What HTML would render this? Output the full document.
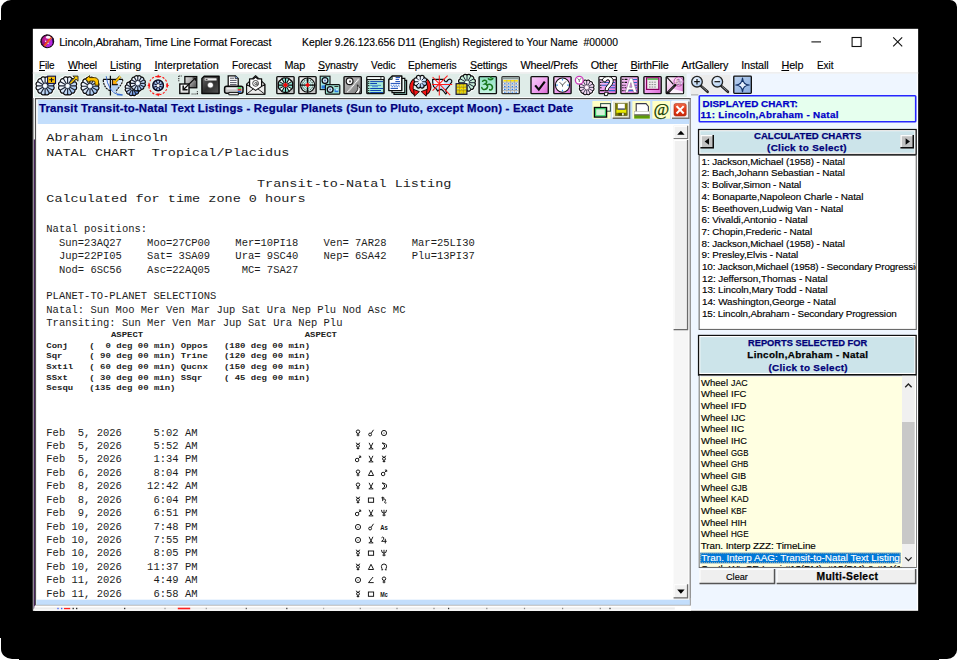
<!DOCTYPE html>
<html><head><meta charset="utf-8"><title>Kepler</title>
<style>
html,body{margin:0;padding:0;}
body{width:957px;height:660px;overflow:hidden;background:#fff;position:relative;font-family:"Liberation Sans",sans-serif;}
body div,body span.t,body svg.i{position:absolute;}
span.t{white-space:pre;line-height:1;}
u{text-decoration:underline;text-decoration-thickness:1px;text-underline-offset:1px;}
</style></head>
<body>
<svg class="i" style="left:0;top:0" width="957" height="660" viewBox="0 0 957 660"><path d="M11 0H950A7 7 0 0 1 957 7V650A10 9 0 0 1 947 659H939V660H19V659H12A11 10 0 0 1 1 649V638H0V20H1V9A10 9 0 0 1 11 0Z" fill="#000" /><rect x="32.85" y="28.8" width="885.3" height="582" fill="#fff" /><g stroke="#111" stroke-width="1.1" fill="none"><path d="M811.4 41.9H821"/><rect x="852.1" y="37.5" width="9" height="9"/><path d="M893.2 37.3L902.2 46.3M902.2 37.3L893.2 46.3"/></g><rect x="32.85" y="72.2" width="885.3" height="1.5" fill="#ececec" /><rect x="34.4" y="73.7" width="652.4" height="23.4" fill="#dfece8" /><rect x="686.8" y="73.7" width="230" height="535.8" fill="#eff6ff" /><rect x="690.6" y="74.6" width="40" height="19.6" fill="#ececec" /><rect x="691" y="94.2" width="7.4" height="1.3" fill="#b4b4b4" /><rect x="34.4" y="97.1" width="656.6" height="512.4" fill="#fbfbfb" /><rect x="36" y="99.1" width="653.9" height="505.6" fill="#fff" /><rect x="32.85" y="98" width="0.9" height="511.5" fill="#8a8a8a" /><rect x="33.8" y="139.5" width="1.2" height="469" fill="#3a0850" /><rect x="34.85" y="139.5" width="1.2" height="466" fill="#8c988c" /><path d="M35.5 605.2V98.6H690.8" fill="none" stroke="#505050" stroke-width="1.15" /><path d="M690.2 98.2L690.2 605.6" stroke="#7c7c7c" stroke-width="1.2" fill="none" /><rect x="37.7" y="99.8" width="651.6" height="24.2" fill="#c3defc" /><rect x="673.6" y="125.4" width="14.8" height="474.2" fill="#f6f6f6" /><rect x="673.6" y="125.8" width="14.600000000000023" height="13.200000000000003" fill="#f0f0f0" /><path d="M674.1 139V126.3H688.2" fill="none" stroke="#fff" stroke-width="1" /><path d="M673.6 138.45H687.6500000000001V125.8" fill="none" stroke="#7a7a7a" stroke-width="1.1" /><path d="M677.2 134.7L680.9 130.7L684.6 134.7Z" fill="#000" /><rect x="673.6" y="140" width="14.600000000000023" height="190.2" fill="#f0f0f0" /><path d="M674.1 330.2V140.5H688.2" fill="none" stroke="#fff" stroke-width="1" /><path d="M673.6 329.55H687.5500000000001V140" fill="none" stroke="#6a6a6a" stroke-width="1.3" /><rect x="673.6" y="584.2" width="14.600000000000023" height="14.299999999999955" fill="#f0f0f0" /><path d="M674.1 598.5V584.7H688.2" fill="none" stroke="#fff" stroke-width="1" /><path d="M673.6 597.85H687.5500000000001V584.2" fill="none" stroke="#6a6a6a" stroke-width="1.3" /><path d="M677.2 589.6L680.9 593.7L684.6 589.6Z" fill="#000" /><rect x="36.5" y="599.7" width="653.4" height="5.3" fill="#c3defc" /><path d="M35.8 605.3H690.4V598" fill="none" stroke="#a8a8a8" stroke-width="0.9" /><rect x="34.4" y="605.8" width="656.6" height="5" fill="#fff" /><rect x="34.4" y="607.4" width="640.4" height="2.1" fill="#ededed" /><rect x="57.4" y="607.8" width="1.2" height="1.4" fill="#3050ff" /><rect x="61.1" y="607.8" width="1.2" height="1.4" fill="#3050ff" /><rect x="72.60000000000001" y="607.8" width="1.2" height="1.4" fill="#111" /><rect x="76.10000000000001" y="607.8" width="1.2" height="1.4" fill="#111" /><rect x="124.10000000000001" y="607.8" width="1.2" height="1.4" fill="#222" /><rect x="164.4" y="607.8" width="1.2" height="1.4" fill="#999" /><rect x="205.70000000000002" y="607.8" width="1.2" height="1.4" fill="#999" /><rect x="245.70000000000002" y="607.8" width="1.2" height="1.4" fill="#555" /><rect x="286.2" y="607.8" width="1.2" height="1.4" fill="#333" /><rect x="323.0" y="607.8" width="1.2" height="1.4" fill="#aaa" /><rect x="359.7" y="607.8" width="1.2" height="1.4" fill="#888" /><rect x="396.4" y="607.8" width="1.2" height="1.4" fill="#888" /><rect x="433.4" y="607.8" width="1.2" height="1.4" fill="#888" /><rect x="448.0" y="607.8" width="1.2" height="1.4" fill="#333" /><rect x="486.2" y="607.8" width="1.2" height="1.4" fill="#888" /><rect x="523.9" y="607.8" width="1.2" height="1.4" fill="#888" /><rect x="562.0" y="607.8" width="1.2" height="1.4" fill="#888" /><rect x="599.6999999999999" y="607.8" width="1.2" height="1.4" fill="#888" /><rect x="609.4" y="607.8" width="1.2" height="1.4" fill="#333" /><rect x="64" y="607.9" width="6.2" height="1.3" fill="#ff2020" /><rect x="177.8" y="607.7" width="12.4" height="1.6" fill="#ff2020" /><rect x="699.3" y="95.8" width="216.4" height="25.999999999999993" fill="#e6ffee" stroke="#2626ff" stroke-width="1.6" rx="0.8" /><rect x="697.9" y="128.9" width="218.89999999999998" height="26.0" fill="#101010" /><rect x="699.1999999999999" y="130.1" width="216.29999999999998" height="23.8" fill="#fff" /><rect x="700.3" y="131.20000000000002" width="214.09999999999997" height="21.6" fill="#cce4ea" /><rect x="700.4" y="134.9" width="13.600000000000023" height="13.699999999999989" fill="#c2c2c2" /><path d="M701.1 148.6V135.6H714" fill="none" stroke="#fcfcfc" stroke-width="1.4" /><path d="M700.4 147.85H713.25V134.9" fill="none" stroke="#0c0c0c" stroke-width="1.5" /><path d="M709.0 138.25L704.6 141.55L709.0 144.85000000000002Z" fill="#0a0a0a" /><rect x="900.4" y="134.9" width="13.600000000000023" height="13.699999999999989" fill="#c2c2c2" /><path d="M901.1 148.6V135.6H914" fill="none" stroke="#fcfcfc" stroke-width="1.4" /><path d="M900.4 147.85H913.25V134.9" fill="none" stroke="#0c0c0c" stroke-width="1.5" /><path d="M905.6 138.25L910.0 141.55L905.6 144.85000000000002Z" fill="#0a0a0a" /><rect x="699.15" y="155.45000000000002" width="217.09999999999994" height="174.0" fill="#fff" stroke="#6a6a6a" stroke-width="1.1" /><rect x="697.9" y="334.8" width="218.89999999999998" height="41.0" fill="#101010" /><rect x="699.1999999999999" y="336.0" width="216.29999999999998" height="38.0" fill="#fff" /><rect x="700.3" y="337.1" width="214.09999999999997" height="35.800000000000004" fill="#cce4ea" /><rect x="699.25" y="376.35" width="216.99999999999991" height="191.1" fill="#ffffe1" stroke="#6a6a6a" stroke-width="1.1" /><rect x="699.8" y="375.8" width="215" height="1.1" fill="#fff" /><rect x="699.8" y="375.8" width="1" height="191" fill="#fff" /><rect x="700.2" y="552.7" width="200.4" height="10.6" fill="#0078d7" /><rect x="700.7" y="553.2" width="199.4" height="9.6" fill="none" stroke="#f0c890" stroke-width="0.9" stroke-dasharray="1 1"/><rect x="902" y="375.8" width="12.8" height="191.3" fill="#f0f0f0" /><rect x="902" y="422" width="12.8" height="122" fill="#c8c8c8" /><rect x="914.8" y="375.8" width="1.2" height="191.3" fill="#fff" /><path d="M905.2 387.2L908.4 384L911.6 387.2M905.2 557.4L908.4 560.6L911.6 557.4" fill="none" stroke="#222" stroke-width="1.3" /><rect x="699.5" y="568.9" width="75.79999999999995" height="15.300000000000068" fill="#efefef" /><path d="M700.0 584.2V569.4H775.3" fill="none" stroke="#fff" stroke-width="1" /><path d="M699.5 583.45H774.55V568.9" fill="none" stroke="#555" stroke-width="1.5" /><rect x="776.6" y="568.9" width="139.79999999999995" height="15.300000000000068" fill="#efefef" /><path d="M777.1 584.2V569.4H916.4" fill="none" stroke="#fff" stroke-width="1" /><path d="M776.6 583.45H915.65V568.9" fill="none" stroke="#555" stroke-width="1.5" /></svg>
<span class="t" style="left:59.2px;top:37px;font-size:10.8px;color:#000;-webkit-text-stroke:.15px;letter-spacing:-0.093px;">Lincoln,Abraham, Time Line Format Forecast</span>
<span class="t" style="left:301.5px;top:37px;font-size:10.8px;color:#000;-webkit-text-stroke:.15px;transform:scale(0.956,1);transform-origin:0 84.65%;">Kepler 9.26.123.656 D11 (English) Registered to Your Name  #00000</span>
<span class="t" style="left:39.4px;top:60px;font-size:10.8px;color:#000;-webkit-text-stroke:.15px;letter-spacing:-0.15px;transform:scale(0.92,1);transform-origin:0 84.65%;"><u>F</u>ile</span>
<span class="t" style="left:68.2px;top:60px;font-size:10.8px;color:#000;-webkit-text-stroke:.15px;letter-spacing:-0.15px;transform:scale(0.973,1);transform-origin:0 84.65%;"><u>W</u>heel</span>
<span class="t" style="left:110px;top:60px;font-size:10.8px;color:#000;-webkit-text-stroke:.15px;letter-spacing:0.014px;"><u>L</u>isting</span>
<span class="t" style="left:154.5px;top:60px;font-size:10.8px;color:#000;-webkit-text-stroke:.15px;letter-spacing:0.044px;"><u>I</u>nterpretation</span>
<span class="t" style="left:232.2px;top:60px;font-size:10.8px;color:#000;-webkit-text-stroke:.15px;transform:scale(0.933,1);transform-origin:0 84.65%;">Forecast</span>
<span class="t" style="left:284.5px;top:60px;font-size:10.8px;color:#000;-webkit-text-stroke:.15px;letter-spacing:-0.158px;">Map</span>
<span class="t" style="left:317.9px;top:60px;font-size:10.8px;color:#000;-webkit-text-stroke:.15px;letter-spacing:-0.15px;transform:scale(0.9789,1);transform-origin:0 84.65%;"><u>S</u>ynastry</span>
<span class="t" style="left:370.5px;top:60px;font-size:10.8px;color:#000;-webkit-text-stroke:.15px;transform:scale(0.9273,1);transform-origin:0 84.65%;">Vedic</span>
<span class="t" style="left:408px;top:60px;font-size:10.8px;color:#000;-webkit-text-stroke:.15px;transform:scale(0.9436,1);transform-origin:0 84.65%;">Ephemeris</span>
<span class="t" style="left:470.2px;top:60px;font-size:10.8px;color:#000;-webkit-text-stroke:.15px;letter-spacing:-0.15px;transform:scale(0.9825,1);transform-origin:0 84.65%;"><u>S</u>ettings</span>
<span class="t" style="left:520.4px;top:60px;font-size:10.8px;color:#000;-webkit-text-stroke:.15px;letter-spacing:-0.121px;">Wheel/Prefs</span>
<span class="t" style="left:590.8px;top:60px;font-size:10.8px;color:#000;-webkit-text-stroke:.15px;letter-spacing:-0.079px;">Othe<u>r</u></span>
<span class="t" style="left:630.4px;top:60px;font-size:10.8px;color:#000;-webkit-text-stroke:.15px;letter-spacing:-0.151px;"><u>B</u>irthFile</span>
<span class="t" style="left:681.6px;top:60px;font-size:10.8px;color:#000;-webkit-text-stroke:.15px;letter-spacing:-0.133px;">ArtGallery</span>
<span class="t" style="left:741.2px;top:60px;font-size:10.8px;color:#000;-webkit-text-stroke:.15px;letter-spacing:-0.136px;">Install</span>
<span class="t" style="left:781.4px;top:60px;font-size:10.8px;color:#000;-webkit-text-stroke:.15px;letter-spacing:-0.073px;"><u>H</u>elp</span>
<span class="t" style="left:816.9px;top:60px;font-size:10.8px;color:#000;-webkit-text-stroke:.15px;transform:scale(0.9167,1);transform-origin:0 84.65%;">Exit</span>
<span class="t" style="left:38.9px;top:103px;font-size:11.4px;color:#00007c;font-weight:700;-webkit-text-stroke:.25px;letter-spacing:0.199px;">Transit Transit-to-Natal Text Listings - Regular Planets (Sun to Pluto, except Moon) - Exact Date</span>
<span class="t" style="left:46.3px;top:131px;font-size:13.5px;color:#1c1c1c;font-family:'Liberation Mono',monospace;transform:scale(1,0.8);transform-origin:0 76.65%;">Abraham Lincoln</span>
<span class="t" style="left:46.3px;top:146px;font-size:13.5px;color:#1c1c1c;font-family:'Liberation Mono',monospace;transform:scale(1,0.8);transform-origin:0 76.65%;">NATAL CHART  Tropical/Placidus</span>
<span class="t" style="left:46.3px;top:177px;font-size:13.5px;color:#1c1c1c;font-family:'Liberation Mono',monospace;transform:scale(1,0.8);transform-origin:0 76.65%;">                          Transit-to-Natal Listing</span>
<span class="t" style="left:46.3px;top:192px;font-size:13.5px;color:#1c1c1c;font-family:'Liberation Mono',monospace;transform:scale(1,0.8);transform-origin:0 76.65%;">Calculated for time zone 0 hours</span>
<span class="t" style="left:46.3px;top:224px;font-size:10.5px;color:#1c1c1c;font-family:'Liberation Mono',monospace;transform:scale(1,0.98);transform-origin:0 76.65%;">Natal positions:</span>
<span class="t" style="left:46.3px;top:238px;font-size:10.5px;color:#1c1c1c;font-family:'Liberation Mono',monospace;transform:scale(1,0.98);transform-origin:0 76.65%;">  Sun=23AQ27    Moo=27CP00    Mer=10PI18    Ven= 7AR28    Mar=25LI30</span>
<span class="t" style="left:46.3px;top:251px;font-size:10.5px;color:#1c1c1c;font-family:'Liberation Mono',monospace;transform:scale(1,0.98);transform-origin:0 76.65%;">  Jup=22PI05    Sat= 3SA09    Ura= 9SC40    Nep= 6SA42    Plu=13PI37</span>
<span class="t" style="left:46.3px;top:265px;font-size:10.5px;color:#1c1c1c;font-family:'Liberation Mono',monospace;transform:scale(1,0.98);transform-origin:0 76.65%;">  Nod= 6SC56    Asc=22AQ05     MC= 7SA27</span>
<span class="t" style="left:46.3px;top:291px;font-size:10.5px;color:#1c1c1c;font-family:'Liberation Mono',monospace;transform:scale(1,0.98);transform-origin:0 76.65%;">PLANET-TO-PLANET SELECTIONS</span>
<span class="t" style="left:46.3px;top:305px;font-size:10.5px;color:#1c1c1c;font-family:'Liberation Mono',monospace;transform:scale(1,0.98);transform-origin:0 76.65%;">Natal: Sun Moo Mer Ven Mar Jup Sat Ura Nep Plu Nod Asc MC</span>
<span class="t" style="left:46.3px;top:318px;font-size:10.5px;color:#1c1c1c;font-family:'Liberation Mono',monospace;transform:scale(1,0.98);transform-origin:0 76.65%;">Transiting: Sun Mer Ven Mar Jup Sat Ura Nep Plu</span>
<span class="t" style="left:46.3px;top:331px;font-size:8.97px;color:#222;font-weight:700;font-family:'Liberation Mono',monospace;transform:scale(1,0.82);transform-origin:0 76.65%;">            ASPECT                              ASPECT</span>
<span class="t" style="left:46.3px;top:342px;font-size:8.97px;color:#222;font-weight:700;font-family:'Liberation Mono',monospace;transform:scale(1,0.82);transform-origin:0 76.65%;">Conj    (  0 deg 00 min) Oppos   (180 deg 00 min)</span>
<span class="t" style="left:46.3px;top:352px;font-size:8.97px;color:#222;font-weight:700;font-family:'Liberation Mono',monospace;transform:scale(1,0.82);transform-origin:0 76.65%;">Sqr     ( 90 deg 00 min) Trine   (120 deg 00 min)</span>
<span class="t" style="left:46.3px;top:363px;font-size:8.97px;color:#222;font-weight:700;font-family:'Liberation Mono',monospace;transform:scale(1,0.82);transform-origin:0 76.65%;">Sxtil   ( 60 deg 00 min) Qucnx   (150 deg 00 min)</span>
<span class="t" style="left:46.3px;top:374px;font-size:8.97px;color:#222;font-weight:700;font-family:'Liberation Mono',monospace;transform:scale(1,0.82);transform-origin:0 76.65%;">SSxt    ( 30 deg 00 min) SSqr    ( 45 deg 00 min)</span>
<span class="t" style="left:46.3px;top:384px;font-size:8.97px;color:#222;font-weight:700;font-family:'Liberation Mono',monospace;transform:scale(1,0.82);transform-origin:0 76.65%;">Sesqu   (135 deg 00 min)</span>
<span class="t" style="left:46.3px;top:428px;font-size:10.5px;color:#1c1c1c;font-family:'Liberation Mono',monospace;transform:scale(1,0.98);transform-origin:0 76.65%;">Feb  5, 2026     5:02 AM</span>
<svg class="i" style="left:354.20px;top:428.50px" width="8" height="8" viewBox="-4 -4 8 8"><g fill="none" stroke="#111" stroke-width=".95"><circle cx="0" cy="-1.3" r="1.75"/><path d="M0 .5V3.3M-1.4 2H1.4"/></g></svg>
<svg class="i" style="left:367.10px;top:428.50px" width="8" height="8" viewBox="-4 -4 8 8"><g fill="none" stroke="#111" stroke-width=".95"><circle cx="-.9" cy="1.5" r="1.45"/><path d="M.1 .4L2.5 -3.2"/></g></svg>
<svg class="i" style="left:380.00px;top:428.50px" width="8" height="8" viewBox="-4 -4 8 8"><g fill="none" stroke="#111" stroke-width=".95"><circle cx="0" cy="0" r="2.6"/><circle cx="0" cy="0" r=".55" fill="#111" stroke="none"/></g></svg>
<span class="t" style="left:46.3px;top:441px;font-size:10.5px;color:#1c1c1c;font-family:'Liberation Mono',monospace;transform:scale(1,0.98);transform-origin:0 76.65%;">Feb  5, 2026     5:52 AM</span>
<svg class="i" style="left:354.20px;top:441.93px" width="8" height="8" viewBox="-4 -4 8 8"><g fill="none" stroke="#111" stroke-width=".95"><circle cx="0" cy="-.2" r="1.45"/><path d="M-1.7 -3.3Q-1.5 -1.7 0 -1.7Q1.5 -1.7 1.7 -3.3M0 1.3V3.4M-1.3 2.4H1.3"/></g></svg>
<svg class="i" style="left:367.10px;top:441.93px" width="8" height="8" viewBox="-4 -4 8 8"><g fill="none" stroke="#111" stroke-width=".95"><path d="M-1.9 -3.2L0 .9L1.9 -3.2M0 .9L-1.7 2.7M0 .9L1.7 2.7M-2.3 2.9H2.3"/></g></svg>
<svg class="i" style="left:380.00px;top:441.93px" width="8" height="8" viewBox="-4 -4 8 8"><g fill="none" stroke="#111" stroke-width=".95"><path d="M-1.9 -3Q2.6 -2.6 2.6 0Q2.6 2.6 -1.9 3Q.7 1.8 .7 0Q.7 -1.8 -1.9 -3Z"/></g></svg>
<span class="t" style="left:46.3px;top:454px;font-size:10.5px;color:#1c1c1c;font-family:'Liberation Mono',monospace;transform:scale(1,0.98);transform-origin:0 76.65%;">Feb  5, 2026     1:34 PM</span>
<svg class="i" style="left:354.20px;top:455.36px" width="8" height="8" viewBox="-4 -4 8 8"><g fill="none" stroke="#111" stroke-width=".95"><circle cx="-.9" cy="1" r="1.75"/><path d="M.4 -.3L2.5 -2.6M.9 -2.9H2.7V-1.1"/></g></svg>
<svg class="i" style="left:367.10px;top:455.36px" width="8" height="8" viewBox="-4 -4 8 8"><g fill="none" stroke="#111" stroke-width=".95"><path d="M-1.9 -3.2L0 .9L1.9 -3.2M0 .9L-1.7 2.7M0 .9L1.7 2.7M-2.3 2.9H2.3"/></g></svg>
<svg class="i" style="left:380.00px;top:455.36px" width="8" height="8" viewBox="-4 -4 8 8"><g fill="none" stroke="#111" stroke-width=".95"><circle cx="0" cy="-.2" r="1.45"/><path d="M-1.7 -3.3Q-1.5 -1.7 0 -1.7Q1.5 -1.7 1.7 -3.3M0 1.3V3.4M-1.3 2.4H1.3"/></g></svg>
<span class="t" style="left:46.3px;top:468px;font-size:10.5px;color:#1c1c1c;font-family:'Liberation Mono',monospace;transform:scale(1,0.98);transform-origin:0 76.65%;">Feb  6, 2026     8:04 PM</span>
<svg class="i" style="left:354.20px;top:468.79px" width="8" height="8" viewBox="-4 -4 8 8"><g fill="none" stroke="#111" stroke-width=".95"><circle cx="0" cy="-1.3" r="1.75"/><path d="M0 .5V3.3M-1.4 2H1.4"/></g></svg>
<svg class="i" style="left:367.10px;top:468.79px" width="8" height="8" viewBox="-4 -4 8 8"><g fill="none" stroke="#111" stroke-width=".95"><path d="M0 -2.7L2.6 2.5H-2.6Z"/></g></svg>
<svg class="i" style="left:380.00px;top:468.79px" width="8" height="8" viewBox="-4 -4 8 8"><g fill="none" stroke="#111" stroke-width=".95"><circle cx="-.9" cy="1" r="1.75"/><path d="M.4 -.3L2.5 -2.6M.9 -2.9H2.7V-1.1"/></g></svg>
<span class="t" style="left:46.3px;top:481px;font-size:10.5px;color:#1c1c1c;font-family:'Liberation Mono',monospace;transform:scale(1,0.98);transform-origin:0 76.65%;">Feb  8, 2026    12:42 AM</span>
<svg class="i" style="left:354.20px;top:482.22px" width="8" height="8" viewBox="-4 -4 8 8"><g fill="none" stroke="#111" stroke-width=".95"><circle cx="0" cy="-1.3" r="1.75"/><path d="M0 .5V3.3M-1.4 2H1.4"/></g></svg>
<svg class="i" style="left:367.10px;top:482.22px" width="8" height="8" viewBox="-4 -4 8 8"><g fill="none" stroke="#111" stroke-width=".95"><path d="M-1.9 -3.2L0 .9L1.9 -3.2M0 .9L-1.7 2.7M0 .9L1.7 2.7M-2.3 2.9H2.3"/></g></svg>
<svg class="i" style="left:380.00px;top:482.22px" width="8" height="8" viewBox="-4 -4 8 8"><g fill="none" stroke="#111" stroke-width=".95"><path d="M-1.9 -3Q2.6 -2.6 2.6 0Q2.6 2.6 -1.9 3Q.7 1.8 .7 0Q.7 -1.8 -1.9 -3Z"/></g></svg>
<span class="t" style="left:46.3px;top:495px;font-size:10.5px;color:#1c1c1c;font-family:'Liberation Mono',monospace;transform:scale(1,0.98);transform-origin:0 76.65%;">Feb  8, 2026     6:04 PM</span>
<svg class="i" style="left:354.20px;top:495.65px" width="8" height="8" viewBox="-4 -4 8 8"><g fill="none" stroke="#111" stroke-width=".95"><circle cx="0" cy="-.2" r="1.45"/><path d="M-1.7 -3.3Q-1.5 -1.7 0 -1.7Q1.5 -1.7 1.7 -3.3M0 1.3V3.4M-1.3 2.4H1.3"/></g></svg>
<svg class="i" style="left:367.10px;top:495.65px" width="8" height="8" viewBox="-4 -4 8 8"><g fill="none" stroke="#111" stroke-width=".95"><rect x="-2.6" y="-2" width="5.2" height="4.3"/></g></svg>
<svg class="i" style="left:380.00px;top:495.65px" width="8" height="8" viewBox="-4 -4 8 8"><g fill="none" stroke="#111" stroke-width=".95"><path d="M-1.3 -3.3V1.1M-2.6 -2.2H.2M-1.3 -.3Q-.3 -1.5 .9 -.9Q2.2 0 1 1.5Q.4 2.4 1 3Q1.6 3.4 2.4 2.8"/></g></svg>
<span class="t" style="left:46.3px;top:508px;font-size:10.5px;color:#1c1c1c;font-family:'Liberation Mono',monospace;transform:scale(1,0.98);transform-origin:0 76.65%;">Feb  9, 2026     6:51 PM</span>
<svg class="i" style="left:354.20px;top:509.08px" width="8" height="8" viewBox="-4 -4 8 8"><g fill="none" stroke="#111" stroke-width=".95"><circle cx="-.9" cy="1" r="1.75"/><path d="M.4 -.3L2.5 -2.6M.9 -2.9H2.7V-1.1"/></g></svg>
<svg class="i" style="left:367.10px;top:509.08px" width="8" height="8" viewBox="-4 -4 8 8"><g fill="none" stroke="#111" stroke-width=".95"><path d="M-1.9 -3.2L0 .9L1.9 -3.2M0 .9L-1.7 2.7M0 .9L1.7 2.7M-2.3 2.9H2.3"/></g></svg>
<svg class="i" style="left:380.00px;top:509.08px" width="8" height="8" viewBox="-4 -4 8 8"><g fill="none" stroke="#111" stroke-width=".95"><path d="M-2.5 -3.1Q-2.5 .2 0 .2Q2.5 .2 2.5 -3.1M0 -3.2V3.3M-1.6 2.1H1.6"/></g></svg>
<span class="t" style="left:46.3px;top:522px;font-size:10.5px;color:#1c1c1c;font-family:'Liberation Mono',monospace;transform:scale(1,0.98);transform-origin:0 76.65%;">Feb 10, 2026     7:48 PM</span>
<svg class="i" style="left:354.20px;top:522.51px" width="8" height="8" viewBox="-4 -4 8 8"><g fill="none" stroke="#111" stroke-width=".95"><circle cx="0" cy="0" r="2.6"/><circle cx="0" cy="0" r=".55" fill="#111" stroke="none"/></g></svg>
<svg class="i" style="left:367.10px;top:522.51px" width="8" height="8" viewBox="-4 -4 8 8"><g fill="none" stroke="#111" stroke-width=".95"><circle cx="-.9" cy="1.5" r="1.45"/><path d="M.1 .4L2.5 -3.2"/></g></svg>
<svg class="i" style="left:379.00px;top:522.51px" width="10" height="8" viewBox="-5 -4 10 8"><text x="0" y="3" text-anchor="middle" font-family="Liberation Sans" font-size="7.2" font-weight="700" fill="#111" textLength="7.5" lengthAdjust="spacingAndGlyphs">As</text></svg>
<span class="t" style="left:46.3px;top:535px;font-size:10.5px;color:#1c1c1c;font-family:'Liberation Mono',monospace;transform:scale(1,0.98);transform-origin:0 76.65%;">Feb 10, 2026     7:55 PM</span>
<svg class="i" style="left:354.20px;top:535.94px" width="8" height="8" viewBox="-4 -4 8 8"><g fill="none" stroke="#111" stroke-width=".95"><circle cx="0" cy="0" r="2.6"/><circle cx="0" cy="0" r=".55" fill="#111" stroke="none"/></g></svg>
<svg class="i" style="left:367.10px;top:535.94px" width="8" height="8" viewBox="-4 -4 8 8"><g fill="none" stroke="#111" stroke-width=".95"><path d="M-1.9 -3.2L0 .9L1.9 -3.2M0 .9L-1.7 2.7M0 .9L1.7 2.7M-2.3 2.9H2.3"/></g></svg>
<svg class="i" style="left:380.00px;top:535.94px" width="8" height="8" viewBox="-4 -4 8 8"><g fill="none" stroke="#111" stroke-width=".95"><path d="M-2.5 -2.2Q-1.2 -3.6 -.3 -2.4Q.6 -.8 -2.4 1.3H2.7M1.3 -1.2V3.4"/></g></svg>
<span class="t" style="left:46.3px;top:548px;font-size:10.5px;color:#1c1c1c;font-family:'Liberation Mono',monospace;transform:scale(1,0.98);transform-origin:0 76.65%;">Feb 10, 2026     8:05 PM</span>
<svg class="i" style="left:354.20px;top:549.37px" width="8" height="8" viewBox="-4 -4 8 8"><g fill="none" stroke="#111" stroke-width=".95"><circle cx="0" cy="-.2" r="1.45"/><path d="M-1.7 -3.3Q-1.5 -1.7 0 -1.7Q1.5 -1.7 1.7 -3.3M0 1.3V3.4M-1.3 2.4H1.3"/></g></svg>
<svg class="i" style="left:367.10px;top:549.37px" width="8" height="8" viewBox="-4 -4 8 8"><g fill="none" stroke="#111" stroke-width=".95"><rect x="-2.6" y="-2" width="5.2" height="4.3"/></g></svg>
<svg class="i" style="left:380.00px;top:549.37px" width="8" height="8" viewBox="-4 -4 8 8"><g fill="none" stroke="#111" stroke-width=".95"><path d="M-2.5 -3.1Q-2.5 .2 0 .2Q2.5 .2 2.5 -3.1M0 -3.2V3.3M-1.6 2.1H1.6"/></g></svg>
<span class="t" style="left:46.3px;top:562px;font-size:10.5px;color:#1c1c1c;font-family:'Liberation Mono',monospace;transform:scale(1,0.98);transform-origin:0 76.65%;">Feb 10, 2026    11:37 PM</span>
<svg class="i" style="left:354.20px;top:562.80px" width="8" height="8" viewBox="-4 -4 8 8"><g fill="none" stroke="#111" stroke-width=".95"><circle cx="0" cy="-.2" r="1.45"/><path d="M-1.7 -3.3Q-1.5 -1.7 0 -1.7Q1.5 -1.7 1.7 -3.3M0 1.3V3.4M-1.3 2.4H1.3"/></g></svg>
<svg class="i" style="left:367.10px;top:562.80px" width="8" height="8" viewBox="-4 -4 8 8"><g fill="none" stroke="#111" stroke-width=".95"><path d="M0 -2.7L2.6 2.5H-2.6Z"/></g></svg>
<svg class="i" style="left:380.00px;top:562.80px" width="8" height="8" viewBox="-4 -4 8 8"><g fill="none" stroke="#111" stroke-width=".95"><path d="M-2.7 2.8H-1.1Q-2.6 1.4 -2.6 -.4A2.6 2.6 0 0 1 2.6 -.4Q2.6 1.4 1.1 2.8H2.7"/></g></svg>
<span class="t" style="left:46.3px;top:575px;font-size:10.5px;color:#1c1c1c;font-family:'Liberation Mono',monospace;transform:scale(1,0.98);transform-origin:0 76.65%;">Feb 11, 2026     4:49 AM</span>
<svg class="i" style="left:354.20px;top:576.23px" width="8" height="8" viewBox="-4 -4 8 8"><g fill="none" stroke="#111" stroke-width=".95"><circle cx="0" cy="0" r="2.6"/><circle cx="0" cy="0" r=".55" fill="#111" stroke="none"/></g></svg>
<svg class="i" style="left:367.10px;top:576.23px" width="8" height="8" viewBox="-4 -4 8 8"><g fill="none" stroke="#111" stroke-width=".95"><path d="M2.1 -3L-2.5 2.6H2.7"/></g></svg>
<svg class="i" style="left:380.00px;top:576.23px" width="8" height="8" viewBox="-4 -4 8 8"><g fill="none" stroke="#111" stroke-width=".95"><circle cx="0" cy="-1.3" r="1.75"/><path d="M0 .5V3.3M-1.4 2H1.4"/></g></svg>
<span class="t" style="left:46.3px;top:589px;font-size:10.5px;color:#1c1c1c;font-family:'Liberation Mono',monospace;transform:scale(1,0.98);transform-origin:0 76.65%;">Feb 11, 2026     6:58 AM</span>
<svg class="i" style="left:354.20px;top:589.66px" width="8" height="8" viewBox="-4 -4 8 8"><g fill="none" stroke="#111" stroke-width=".95"><circle cx="0" cy="-.2" r="1.45"/><path d="M-1.7 -3.3Q-1.5 -1.7 0 -1.7Q1.5 -1.7 1.7 -3.3M0 1.3V3.4M-1.3 2.4H1.3"/></g></svg>
<svg class="i" style="left:367.10px;top:589.66px" width="8" height="8" viewBox="-4 -4 8 8"><g fill="none" stroke="#111" stroke-width=".95"><rect x="-2.6" y="-2" width="5.2" height="4.3"/></g></svg>
<svg class="i" style="left:379.00px;top:589.66px" width="10" height="8" viewBox="-5 -4 10 8"><text x="0" y="3" text-anchor="middle" font-family="Liberation Sans" font-size="7.2" font-weight="700" fill="#111" textLength="7.5" lengthAdjust="spacingAndGlyphs">Mc</text></svg>
<span class="t" style="left:702.6px;top:99px;font-size:9.9px;color:#0000c8;font-weight:700;-webkit-text-stroke:.25px;letter-spacing:0.013px;">DISPLAYED CHART:</span>
<span class="t" style="left:700.6px;top:110px;font-size:9.9px;color:#0000c8;font-weight:700;-webkit-text-stroke:.25px;letter-spacing:0.301px;">11: Lincoln,Abraham - Natal</span>
<span class="t" style="left:753.5px;top:131px;font-size:9.9px;color:#000078;font-weight:700;-webkit-text-stroke:.25px;transform:scale(0.9699,1);transform-origin:0 84.65%;">CALCULATED CHARTS</span>
<span class="t" style="left:767px;top:143px;font-size:9.9px;color:#000078;font-weight:700;-webkit-text-stroke:.25px;letter-spacing:0.344px;">(Click to Select)</span>
<span class="t" style="left:701.5px;top:157px;font-size:9.9px;color:#000;-webkit-text-stroke:.15px;letter-spacing:-0.115px;">1: Jackson,Michael (1958) - Natal</span>
<span class="t" style="left:701.5px;top:168px;font-size:9.9px;color:#000;-webkit-text-stroke:.15px;letter-spacing:-0.12px;">2: Bach,Johann Sebastian - Natal</span>
<span class="t" style="left:701.5px;top:180px;font-size:9.9px;color:#000;-webkit-text-stroke:.15px;letter-spacing:-0.147px;">3: Bolivar,Simon - Natal</span>
<span class="t" style="left:701.5px;top:192px;font-size:9.9px;color:#000;-webkit-text-stroke:.15px;letter-spacing:-0.095px;">4: Bonaparte,Napoleon Charle - Natal</span>
<span class="t" style="left:701.5px;top:204px;font-size:9.9px;color:#000;-webkit-text-stroke:.15px;letter-spacing:-0.062px;">5: Beethoven,Ludwig Van - Natal</span>
<span class="t" style="left:701.5px;top:215px;font-size:9.9px;color:#000;-webkit-text-stroke:.15px;letter-spacing:-0.067px;">6: Vivaldi,Antonio - Natal</span>
<span class="t" style="left:701.5px;top:227px;font-size:9.9px;color:#000;-webkit-text-stroke:.15px;letter-spacing:-0.094px;">7: Chopin,Frederic - Natal</span>
<span class="t" style="left:701.5px;top:239px;font-size:9.9px;color:#000;-webkit-text-stroke:.15px;letter-spacing:-0.115px;">8: Jackson,Michael (1958) - Natal</span>
<span class="t" style="left:701.5px;top:250px;font-size:9.9px;color:#000;-webkit-text-stroke:.15px;letter-spacing:-0.079px;">9: Presley,Elvis - Natal</span>
<span class="t" style="left:702px;top:262px;font-size:9.9px;color:#000;-webkit-text-stroke:.15px;letter-spacing:-0.17px;width:213.8px;overflow:hidden;">10: Jackson,Michael (1958) - Secondary Progression</span>
<span class="t" style="left:702px;top:274px;font-size:9.9px;color:#000;-webkit-text-stroke:.15px;letter-spacing:-0.054px;">12: Jefferson,Thomas - Natal</span>
<span class="t" style="left:702px;top:285px;font-size:9.9px;color:#000;-webkit-text-stroke:.15px;letter-spacing:-0.092px;">13: Lincoln,Mary Todd - Natal</span>
<span class="t" style="left:702px;top:297px;font-size:9.9px;color:#000;-webkit-text-stroke:.15px;letter-spacing:-0.067px;">14: Washington,George - Natal</span>
<span class="t" style="left:702px;top:309px;font-size:9.9px;color:#000;-webkit-text-stroke:.15px;letter-spacing:-0.174px;">15: Lincoln,Abraham - Secondary Progression</span>
<span class="t" style="left:748.1px;top:338px;font-size:9.9px;color:#000078;font-weight:700;-webkit-text-stroke:.25px;transform:scale(0.9404,1);transform-origin:0 84.65%;">REPORTS SELECTED FOR</span>
<span class="t" style="left:747.3px;top:350px;font-size:9.9px;color:#000;font-weight:700;-webkit-text-stroke:.25px;letter-spacing:0.324px;">Lincoln,Abraham - Natal</span>
<span class="t" style="left:768.5px;top:363px;font-size:9.9px;color:#000078;font-weight:700;-webkit-text-stroke:.25px;letter-spacing:0.313px;">(Click to Select)</span>
<span class="t" style="left:700.7px;top:378px;font-size:9.9px;color:#000;-webkit-text-stroke:.15px;transform:scale(0.9643,1);transform-origin:0 84.65%;">Wheel</span>
<span class="t" style="left:730.8px;top:378px;font-size:9.9px;color:#000;-webkit-text-stroke:.15px;transform:scale(0.8951,1);transform-origin:0 84.65%;">JAC</span>
<span class="t" style="left:700.7px;top:389px;font-size:9.9px;color:#000;-webkit-text-stroke:.15px;transform:scale(0.9643,1);transform-origin:0 84.65%;">Wheel</span>
<span class="t" style="left:730.8px;top:389px;font-size:9.9px;color:#000;-webkit-text-stroke:.15px;transform:scale(0.9609,1);transform-origin:0 84.65%;">IFC</span>
<span class="t" style="left:700.7px;top:401px;font-size:9.9px;color:#000;-webkit-text-stroke:.15px;transform:scale(0.9643,1);transform-origin:0 84.65%;">Wheel</span>
<span class="t" style="left:730.8px;top:401px;font-size:9.9px;color:#000;-webkit-text-stroke:.15px;transform:scale(0.9609,1);transform-origin:0 84.65%;">IFD</span>
<span class="t" style="left:700.7px;top:413px;font-size:9.9px;color:#000;-webkit-text-stroke:.15px;transform:scale(0.9643,1);transform-origin:0 84.65%;">Wheel</span>
<span class="t" style="left:730.8px;top:413px;font-size:9.9px;color:#000;-webkit-text-stroke:.15px;transform:scale(0.9722,1);transform-origin:0 84.65%;">IJC</span>
<span class="t" style="left:700.7px;top:424px;font-size:9.9px;color:#000;-webkit-text-stroke:.15px;transform:scale(0.9643,1);transform-origin:0 84.65%;">Wheel</span>
<span class="t" style="left:730.8px;top:424px;font-size:9.9px;color:#000;-webkit-text-stroke:.15px;transform:scale(1.0535,1);transform-origin:0 84.65%;">IIC</span>
<span class="t" style="left:700.7px;top:436px;font-size:9.9px;color:#000;-webkit-text-stroke:.15px;transform:scale(0.9643,1);transform-origin:0 84.65%;">Wheel</span>
<span class="t" style="left:730.8px;top:436px;font-size:9.9px;color:#000;-webkit-text-stroke:.15px;transform:scale(0.9403,1);transform-origin:0 84.65%;">IHC</span>
<span class="t" style="left:700.7px;top:448px;font-size:9.9px;color:#000;-webkit-text-stroke:.15px;transform:scale(0.9643,1);transform-origin:0 84.65%;">Wheel</span>
<span class="t" style="left:730.8px;top:448px;font-size:9.9px;color:#000;-webkit-text-stroke:.15px;transform:scale(0.7926,1);transform-origin:0 84.65%;">GGB</span>
<span class="t" style="left:700.7px;top:459px;font-size:9.9px;color:#000;-webkit-text-stroke:.15px;transform:scale(0.9643,1);transform-origin:0 84.65%;">Wheel</span>
<span class="t" style="left:730.8px;top:459px;font-size:9.9px;color:#000;-webkit-text-stroke:.15px;transform:scale(0.8082,1);transform-origin:0 84.65%;">GHB</span>
<span class="t" style="left:700.7px;top:471px;font-size:9.9px;color:#000;-webkit-text-stroke:.15px;transform:scale(0.9643,1);transform-origin:0 84.65%;">Wheel</span>
<span class="t" style="left:730.8px;top:471px;font-size:9.9px;color:#000;-webkit-text-stroke:.15px;transform:scale(0.8874,1);transform-origin:0 84.65%;">GIB</span>
<span class="t" style="left:700.7px;top:483px;font-size:9.9px;color:#000;-webkit-text-stroke:.15px;transform:scale(0.9643,1);transform-origin:0 84.65%;">Wheel</span>
<span class="t" style="left:730.8px;top:483px;font-size:9.9px;color:#000;-webkit-text-stroke:.15px;transform:scale(0.8533,1);transform-origin:0 84.65%;">GJB</span>
<span class="t" style="left:700.7px;top:494px;font-size:9.9px;color:#000;-webkit-text-stroke:.15px;transform:scale(0.9643,1);transform-origin:0 84.65%;">Wheel</span>
<span class="t" style="left:730.8px;top:494px;font-size:9.9px;color:#000;-webkit-text-stroke:.15px;transform:scale(0.8665,1);transform-origin:0 84.65%;">KAD</span>
<span class="t" style="left:700.7px;top:506px;font-size:9.9px;color:#000;-webkit-text-stroke:.15px;transform:scale(0.9643,1);transform-origin:0 84.65%;">Wheel</span>
<span class="t" style="left:730.8px;top:506px;font-size:9.9px;color:#000;-webkit-text-stroke:.15px;transform:scale(0.8117,1);transform-origin:0 84.65%;">KBF</span>
<span class="t" style="left:700.7px;top:518px;font-size:9.9px;color:#000;-webkit-text-stroke:.15px;transform:scale(0.9643,1);transform-origin:0 84.65%;">Wheel</span>
<span class="t" style="left:730.8px;top:518px;font-size:9.9px;color:#000;-webkit-text-stroke:.15px;transform:scale(0.9168,1);transform-origin:0 84.65%;">HIH</span>
<span class="t" style="left:700.7px;top:529px;font-size:9.9px;color:#000;-webkit-text-stroke:.15px;transform:scale(0.9643,1);transform-origin:0 84.65%;">Wheel</span>
<span class="t" style="left:730.8px;top:529px;font-size:9.9px;color:#000;-webkit-text-stroke:.15px;transform:scale(0.8222,1);transform-origin:0 84.65%;">HGE</span>
<span class="t" style="left:700.7px;top:541px;font-size:9.9px;color:#000;-webkit-text-stroke:.15px;letter-spacing:-0.079px;">Tran. Interp ZZZ: TimeLine</span>
<span class="t" style="left:701.2px;top:553px;font-size:9.9px;color:#fff;-webkit-text-stroke:.15px;letter-spacing:0.0px;width:199.2px;overflow:hidden;">Tran. Interp AAG: Transit-to-Natal Text Listing</span>
<span class="t" style="left:701.2px;top:564px;font-size:9.9px;color:#000;-webkit-text-stroke:.15px;letter-spacing:-0.09px;height:3.2px;width:199px;overflow:hidden;">Synth Wt: SE-Lewi #13(PM), #15(DM) &amp; #14(S)</span>
<span class="t" style="left:726.3px;top:572px;font-size:9.9px;color:#000;-webkit-text-stroke:.15px;transform:scale(0.9276,1);transform-origin:0 84.65%;">Clear</span>
<span class="t" style="left:816.6px;top:572px;font-size:10.3px;color:#000;font-weight:700;-webkit-text-stroke:.25px;letter-spacing:0.318px;">Multi-Select</span>
<svg class="i" style="left:33px;top:73px" width="725" height="26" viewBox="33 73 725 26"><defs>
<linearGradient id="wg" x1="0" y1="0" x2="1" y2="1"><stop offset="0" stop-color="#fff"/><stop offset=".4" stop-color="#edf3fb"/><stop offset="1" stop-color="#7eaeea"/></linearGradient>
<linearGradient id="wg2" x1="0" y1="0" x2=".8" y2="1"><stop offset="0" stop-color="#fff"/><stop offset=".45" stop-color="#dce8f8"/><stop offset="1" stop-color="#3a70d8"/></linearGradient>
<linearGradient id="gl" x1="0" y1="0" x2="1" y2="1"><stop offset="0" stop-color="#f2f2f2"/><stop offset=".6" stop-color="#dadada"/><stop offset="1" stop-color="#b4b4b4"/></linearGradient>
<linearGradient id="gq" x1="0" y1="0" x2="1" y2=".6"><stop offset="0" stop-color="#e4e4e4"/><stop offset=".55" stop-color="#a8a8a8"/><stop offset="1" stop-color="#5e5e5e"/></linearGradient>
<linearGradient id="gw" x1="0" y1="0" x2="0" y2="1"><stop offset="0" stop-color="#fff"/><stop offset=".7" stop-color="#f0f0f0"/><stop offset="1" stop-color="#b8b8b8"/></linearGradient>
<linearGradient id="gg" x1="0" y1="0" x2="1" y2="1"><stop offset="0" stop-color="#e8e8e8"/><stop offset="1" stop-color="#9a9a9a"/></linearGradient>
<linearGradient id="gd" x1="0" y1="0" x2="1" y2="1"><stop offset="0" stop-color="#6a6a6a"/><stop offset=".5" stop-color="#2e2e2e"/><stop offset="1" stop-color="#555"/></linearGradient>
<linearGradient id="pk" x1="0" y1="0" x2="1" y2="1"><stop offset="0" stop-color="#f8d0f8"/><stop offset=".6" stop-color="#ee9aee"/><stop offset="1" stop-color="#d868d0"/></linearGradient>
<linearGradient id="tl" x1="0" y1="0" x2="0" y2="1"><stop offset="0" stop-color="#8fe0c0"/><stop offset="1" stop-color="#c8f6e4"/></linearGradient>
<linearGradient id="bl" x1="0" y1="0" x2="1" y2="1"><stop offset="0" stop-color="#bcd2f0"/><stop offset="1" stop-color="#86acdf"/></linearGradient>
<linearGradient id="pw" x1="0" y1="0" x2="1" y2="1"><stop offset="0" stop-color="#fff"/><stop offset="1" stop-color="#e880e0"/></linearGradient>
<linearGradient id="gg2" x1="0" y1="0" x2="1" y2="1"><stop offset="0" stop-color="#c8c8c8"/><stop offset="1" stop-color="#787878"/></linearGradient>
<radialGradient id="lens" cx=".4" cy=".35" r=".7"><stop offset="0" stop-color="#f4f9ff"/><stop offset="1" stop-color="#a8c8ee"/></radialGradient>
</defs><path d="M45.10 77.55A2.50 2.50 0 0 1 49.27 78.67A2.50 2.50 0 0 1 52.33 81.73A2.50 2.50 0 0 1 53.45 85.90A2.50 2.50 0 0 1 52.33 90.08A2.50 2.50 0 0 1 49.27 93.13A2.50 2.50 0 0 1 45.10 94.25A2.50 2.50 0 0 1 40.93 93.13A2.50 2.50 0 0 1 37.87 90.08A2.50 2.50 0 0 1 36.75 85.90A2.50 2.50 0 0 1 37.87 81.73A2.50 2.50 0 0 1 40.92 78.67A2.50 2.50 0 0 1 45.10 77.55Z" fill="none" stroke="#fff" stroke-width="3.45" opacity=".8"/><path d="M45.10 77.55A2.50 2.50 0 0 1 49.27 78.67A2.50 2.50 0 0 1 52.33 81.73A2.50 2.50 0 0 1 53.45 85.90A2.50 2.50 0 0 1 52.33 90.08A2.50 2.50 0 0 1 49.27 93.13A2.50 2.50 0 0 1 45.10 94.25A2.50 2.50 0 0 1 40.93 93.13A2.50 2.50 0 0 1 37.87 90.08A2.50 2.50 0 0 1 36.75 85.90A2.50 2.50 0 0 1 37.87 81.73A2.50 2.50 0 0 1 40.92 78.67A2.50 2.50 0 0 1 45.10 77.55Z" fill="url(#wg)" stroke="#0c0c0c" stroke-width="1.25" stroke-linejoin="round"/><path d="M45.10 83.65L45.10 77.65M46.23 83.95L49.23 78.76M47.05 84.78L52.24 81.78M47.35 85.90L53.35 85.90M47.05 87.03L52.24 90.03M46.23 87.85L49.23 93.04M45.10 88.15L45.10 94.15M43.98 87.85L40.98 93.04M43.15 87.03L37.96 90.03M42.85 85.90L36.85 85.90M43.15 84.78L37.96 81.78M43.98 83.95L40.97 78.76" stroke="#1c2438" stroke-width="1.15" fill="none"/><circle cx="45.1" cy="85.9" r="2.85" fill="none" stroke="#222" stroke-width=".7" stroke-dasharray=".9 .8" opacity=".8"/><circle cx="45.1" cy="85.9" r="1.35" fill="#fff"/><rect x="47.6" y="76.2" width="7.9" height="7.2" fill="#ffc400" stroke="#10104a" stroke-width="1.1"/><path d="M51.5 77.7V82M49.3 79.8H53.8" stroke="#111" stroke-width="1.1"/><path d="M67.60 77.55A2.50 2.50 0 0 1 71.77 78.67A2.50 2.50 0 0 1 74.83 81.73A2.50 2.50 0 0 1 75.95 85.90A2.50 2.50 0 0 1 74.83 90.08A2.50 2.50 0 0 1 71.77 93.13A2.50 2.50 0 0 1 67.60 94.25A2.50 2.50 0 0 1 63.42 93.13A2.50 2.50 0 0 1 60.37 90.08A2.50 2.50 0 0 1 59.25 85.90A2.50 2.50 0 0 1 60.37 81.73A2.50 2.50 0 0 1 63.42 78.67A2.50 2.50 0 0 1 67.60 77.55Z" fill="none" stroke="#fff" stroke-width="3.45" opacity=".8"/><path d="M67.60 77.55A2.50 2.50 0 0 1 71.77 78.67A2.50 2.50 0 0 1 74.83 81.73A2.50 2.50 0 0 1 75.95 85.90A2.50 2.50 0 0 1 74.83 90.08A2.50 2.50 0 0 1 71.77 93.13A2.50 2.50 0 0 1 67.60 94.25A2.50 2.50 0 0 1 63.42 93.13A2.50 2.50 0 0 1 60.37 90.08A2.50 2.50 0 0 1 59.25 85.90A2.50 2.50 0 0 1 60.37 81.73A2.50 2.50 0 0 1 63.42 78.67A2.50 2.50 0 0 1 67.60 77.55Z" fill="url(#wg)" stroke="#0c0c0c" stroke-width="1.25" stroke-linejoin="round"/><path d="M67.60 83.65L67.60 77.65M68.72 83.95L71.72 78.76M69.55 84.78L74.74 81.78M69.85 85.90L75.85 85.90M69.55 87.03L74.74 90.03M68.72 87.85L71.72 93.04M67.60 88.15L67.60 94.15M66.47 87.85L63.47 93.04M65.65 87.03L60.46 90.03M65.35 85.90L59.35 85.90M65.65 84.78L60.46 81.78M66.47 83.95L63.47 78.76" stroke="#1c2438" stroke-width="1.15" fill="none"/><circle cx="67.6" cy="85.9" r="2.85" fill="none" stroke="#222" stroke-width=".7" stroke-dasharray=".9 .8" opacity=".8"/><circle cx="67.6" cy="85.9" r="1.35" fill="#fff"/><path d="M70.2 83.4L76.6 77.2" stroke="#222" stroke-width="2.6"/><path d="M72.9 76.1H78V81.2Z" fill="#ffcc00" stroke="#222" stroke-width=".9"/><path d="M70.4 83.2L76.4 77.4" stroke="#ffcc00" stroke-width="1.3"/><path d="M90.00 77.95A2.48 2.48 0 0 1 94.12 79.06A2.48 2.48 0 0 1 97.14 82.08A2.48 2.48 0 0 1 98.25 86.20A2.48 2.48 0 0 1 97.14 90.33A2.48 2.48 0 0 1 94.12 93.34A2.48 2.48 0 0 1 90.00 94.45A2.48 2.48 0 0 1 85.88 93.34A2.48 2.48 0 0 1 82.86 90.33A2.48 2.48 0 0 1 81.75 86.20A2.48 2.48 0 0 1 82.86 82.08A2.48 2.48 0 0 1 85.88 79.06A2.48 2.48 0 0 1 90.00 77.95Z" fill="none" stroke="#fff" stroke-width="3.45" opacity=".8"/><path d="M90.00 77.95A2.48 2.48 0 0 1 94.12 79.06A2.48 2.48 0 0 1 97.14 82.08A2.48 2.48 0 0 1 98.25 86.20A2.48 2.48 0 0 1 97.14 90.33A2.48 2.48 0 0 1 94.12 93.34A2.48 2.48 0 0 1 90.00 94.45A2.48 2.48 0 0 1 85.88 93.34A2.48 2.48 0 0 1 82.86 90.33A2.48 2.48 0 0 1 81.75 86.20A2.48 2.48 0 0 1 82.86 82.08A2.48 2.48 0 0 1 85.88 79.06A2.48 2.48 0 0 1 90.00 77.95Z" fill="url(#wg)" stroke="#0c0c0c" stroke-width="1.25" stroke-linejoin="round"/><path d="M90.00 83.95L90.00 78.05M91.12 84.25L94.08 79.14M91.95 85.08L97.06 82.12M92.25 86.20L98.15 86.20M91.95 87.33L97.06 90.28M91.12 88.15L94.08 93.26M90.00 88.45L90.00 94.35M88.88 88.15L85.92 93.26M88.05 87.33L82.94 90.28M87.75 86.20L81.85 86.20M88.05 85.08L82.94 82.12M88.88 84.25L85.92 79.14" stroke="#1c2438" stroke-width="1.15" fill="none"/><circle cx="90" cy="86.2" r="2.85" fill="none" stroke="#222" stroke-width=".7" stroke-dasharray=".9 .8" opacity=".8"/><circle cx="90" cy="86.2" r="1.35" fill="#fff"/><path d="M85.6 79.2L89.6 75.6V77.6H94.2Q98.6 77.8 98.6 82V85.2H95V82.3Q95 81 93.6 81H89.6V82.9Z" fill="#ffc400" stroke="#3a2a00" stroke-width=".9" stroke-linejoin="round"/><path d="M102.4 78.4H123.4V84L118 91L117 93.4L111 92L104.4 86Z" fill="#fff" opacity=".75"/><path d="M103.2 79.4Q103.6 88.6 110.4 90.6V79.4Z" fill="#eef4fc"/><path d="M110.6 84.8H120.8L117.6 89.6L116 92.4L110.6 89.4Z" fill="#b4d0f2"/><path d="M117.4 80H122.2L120.6 84.6H116.4Z" fill="#d8e8fa"/><path d="M103.2 79.6Q103.8 88.4 110.2 90.6" fill="none" stroke="#111" stroke-width="1.2" stroke-dasharray="2.2 .7"/><path d="M122.8 79.6Q122.6 83.6 118.4 88Q116.4 90 116.4 92.6" fill="none" stroke="#111" stroke-width="1.1" stroke-dasharray="2 .8"/><path d="M103.1 79.3H122.9M110.4 75.8V95.4" stroke="#0a0a0a" stroke-width="1.25" fill="none"/><path d="M106.2 76.2Q106.8 83 110.4 89Q113.4 93.4 118 94.6" stroke="#3a6cd0" stroke-width="1" fill="none"/><path d="M117 94.4L122.6 95" stroke="#3a6cd0" stroke-width="1.7"/><path d="M112.6 79.6V84.4H117.8" stroke="#0a0a0a" stroke-width="1.5" fill="none"/><path d="M120.4 76.4L114.6 82.4" stroke="#3a2a00" stroke-width="2.8"/><path d="M113.2 80.2V83.8H116.9Z" fill="#ff9c00" stroke="#ff9c00" stroke-width=".6"/><path d="M120.3 76.6L114.4 82.6" stroke="#ffc400" stroke-width="1.7"/><path d="M120.6 76.3L119.4 77.5" stroke="#fff0a0" stroke-width="1.2"/><path d="M132.60 81.35A2.06 2.06 0 0 1 136.03 82.27A2.06 2.06 0 0 1 138.53 84.78A2.06 2.06 0 0 1 139.45 88.20A2.06 2.06 0 0 1 138.53 91.62A2.06 2.06 0 0 1 136.03 94.13A2.06 2.06 0 0 1 132.60 95.05A2.06 2.06 0 0 1 129.17 94.13A2.06 2.06 0 0 1 126.67 91.62A2.06 2.06 0 0 1 125.75 88.20A2.06 2.06 0 0 1 126.67 84.78A2.06 2.06 0 0 1 129.17 82.27A2.06 2.06 0 0 1 132.60 81.35Z" fill="none" stroke="#fff" stroke-width="3.45" opacity=".8"/><path d="M132.60 81.35A2.06 2.06 0 0 1 136.03 82.27A2.06 2.06 0 0 1 138.53 84.78A2.06 2.06 0 0 1 139.45 88.20A2.06 2.06 0 0 1 138.53 91.62A2.06 2.06 0 0 1 136.03 94.13A2.06 2.06 0 0 1 132.60 95.05A2.06 2.06 0 0 1 129.17 94.13A2.06 2.06 0 0 1 126.67 91.62A2.06 2.06 0 0 1 125.75 88.20A2.06 2.06 0 0 1 126.67 84.78A2.06 2.06 0 0 1 129.17 82.27A2.06 2.06 0 0 1 132.60 81.35Z" fill="url(#wg2)" stroke="#0c0c0c" stroke-width="1.25" stroke-linejoin="round"/><path d="M132.60 86.40L132.60 81.45M133.50 86.64L135.97 82.35M134.16 87.30L138.45 84.83M134.40 88.20L139.35 88.20M134.16 89.10L138.45 91.58M133.50 89.76L135.97 94.05M132.60 90.00L132.60 94.95M131.70 89.76L129.22 94.05M131.04 89.10L126.75 91.58M130.80 88.20L125.85 88.20M131.04 87.30L126.75 84.83M131.70 86.64L129.22 82.35" stroke="#1c2438" stroke-width="1.15" fill="none"/><circle cx="132.6" cy="88.2" r="2.40" fill="none" stroke="#222" stroke-width=".7" stroke-dasharray=".9 .8" opacity=".8"/><circle cx="132.6" cy="88.2" r="0.9" fill="#dfe8f6"/><path d="M137.80 76.35A2.08 2.08 0 0 1 141.28 77.28A2.08 2.08 0 0 1 143.82 79.83A2.08 2.08 0 0 1 144.75 83.30A2.08 2.08 0 0 1 143.82 86.77A2.08 2.08 0 0 1 141.28 89.32A2.08 2.08 0 0 1 137.80 90.25A2.08 2.08 0 0 1 134.33 89.32A2.08 2.08 0 0 1 131.78 86.78A2.08 2.08 0 0 1 130.85 83.30A2.08 2.08 0 0 1 131.78 79.83A2.08 2.08 0 0 1 134.33 77.28A2.08 2.08 0 0 1 137.80 76.35Z" fill="url(#wg)" stroke="#0c0c0c" stroke-width="1.25" stroke-linejoin="round"/><path d="M137.80 81.10L137.80 76.45M138.90 81.39L141.23 77.37M139.71 82.20L143.73 79.88M140.00 83.30L144.65 83.30M139.71 84.40L143.73 86.72M138.90 85.21L141.23 89.23M137.80 85.50L137.80 90.15M136.70 85.21L134.38 89.23M135.89 84.40L131.87 86.72M135.60 83.30L130.95 83.30M135.89 82.20L131.87 79.88M136.70 81.39L134.38 77.37" stroke="#1c2438" stroke-width="1.15" fill="none"/><circle cx="137.8" cy="83.3" r="2.80" fill="none" stroke="#222" stroke-width=".7" stroke-dasharray=".9 .8" opacity=".8"/><circle cx="137.8" cy="83.3" r="1.3" fill="#fff"/><circle cx="158.1" cy="85.5" r="9.3" fill="none" stroke="#ff1010" stroke-width="1.1" stroke-dasharray="2.2 1.5"/><path d="M158.2 74.6L160 77.4H156.4ZM158.2 96.4L160 93.6H156.4ZM147.3 85.5L150.1 83.7V87.3ZM169.1 85.5L166.3 83.7V87.3Z" fill="#ff1010"/><circle cx="158.1" cy="85.4" r="7.2" fill="#f4fafa"/><circle cx="158.1" cy="85.4" r="5.3" fill="#a8c4ee" stroke="#0a0a20" stroke-width="1.5"/><path d="M158.1 85.4L162.90 87.39M158.1 85.4L160.09 90.20M158.1 85.4L156.11 90.20M158.1 85.4L153.30 87.39M158.1 85.4L153.30 83.41M158.1 85.4L156.11 80.60M158.1 85.4L160.09 80.60M158.1 85.4L162.90 83.41" stroke="#141432" stroke-width="1.1"/><circle cx="158.1" cy="85.4" r="1.5" fill="#fff"/><path d="M178.8 76H182.4M178.8 76V82M191.6 94H197.4V90.4" stroke="#222" stroke-width="1.1" stroke-dasharray="1 .9" fill="none"/><rect x="184.85" y="76.55" width="11.9" height="11.2" fill="url(#gq)" stroke="#0c0c0c" stroke-width="1.3"/><rect x="179.8" y="84" width="9.2" height="9.5" fill="url(#gw)" stroke="#0c0c0c" stroke-width="1.4"/><path d="M195 78.4L184 89" stroke="#0c0c0c" stroke-width="1.3"/><path d="M192.6 78H195.4V80.8" stroke="#0c0c0c" stroke-width="1.1" fill="none"/><path d="M183.2 85.6V89.8H187.6" stroke="#0c0c0c" stroke-width="1.5" fill="none"/><path d="M204.2 76.3H219.1V93.5H201.9V78.6Z" fill="url(#gd)" stroke="#0a0a0a" stroke-width="1.4" stroke-linejoin="round"/><rect x="204.6" y="78.2" width="12" height="2.4" rx=".5" fill="#ededed"/><rect x="205.6" y="78.9" width="1.9" height="1" fill="#444"/><circle cx="210.4" cy="85.1" r="2.7" fill="#fff"/><circle cx="210.4" cy="85.1" r="2.9" fill="none" stroke="#777" stroke-width=".5"/><path d="M228.2 75.8H235.4L238.2 78.4V87H228.2Z" fill="#fff" stroke="#0c0c0c" stroke-width="1.25"/><path d="M235.2 75.8V78.6H238.2" fill="#7aa0e0" stroke="#222" stroke-width=".8"/><path d="M230 78.2H234M230 80.4H236.6M230 82.6H236.6M230 84.6H236.6" stroke="#445" stroke-width=".9"/><rect x="224.6" y="86.2" width="18.4" height="7" rx="2" fill="#c4c4c4" stroke="#0a0a0a" stroke-width="1.5"/><rect x="226.6" y="88" width="10" height="1.4" fill="#eee"/><rect x="237.8" y="87.3" width="3.4" height="1.5" fill="#30d040"/><rect x="237.8" y="89.1" width="3.4" height="1.5" fill="#e82020"/><rect x="237.8" y="90.9" width="3.4" height="1.4" fill="#2070e0"/><path d="M228.8 92.4H238.4V94.8H228.8Z" fill="#f0f0f0" stroke="#111" stroke-width="1"/><path d="M246.6 84.2L255.6 75.6L264.8 84.2V94.2H246.6Z" fill="#e4e4e4" stroke="#111" stroke-width="1.1" stroke-linejoin="round"/><path d="M249.6 78.8H253.6L255.6 77L257.6 78.8H261.6V86.4Q261 90.6 255.6 91Q250.2 90.6 249.6 86.4Z" fill="#fff" stroke="#0c0c0c" stroke-width="1.25" stroke-linejoin="round"/><circle cx="255.6" cy="83.4" r="2.9" fill="none" stroke="#333" stroke-width=".9"/><circle cx="255.8" cy="83.6" r="1.1" fill="none" stroke="#333" stroke-width=".8"/><path d="M257 82.4V84.6Q257.8 85.4 258.5 84.2" stroke="#333" stroke-width=".7" fill="none"/><path d="M246.6 84.4L255.6 90.4L264.8 84.4V94.2H246.6Z" fill="#ececec" stroke="#111" stroke-width="1.1" stroke-linejoin="round"/><path d="M246.8 94L253.4 88.8M264.6 94L257.8 88.8" stroke="#111" stroke-width=".9"/><rect x="276.80" y="76.60" width="17.30" height="17.00" rx=".8" fill="url(#gl)" stroke="#111" stroke-width="1.4"/><circle cx="285.5" cy="85.1" r="7.0" fill="#f4fffc"/><path d="M285.70 82.91L286.13 78.13A7.0 7.0 0 0 1 288.44 78.75L286.42 83.10ZM287.50 84.18L291.85 82.16A7.0 7.0 0 0 1 292.47 84.47L287.69 84.90ZM287.69 85.30L292.47 85.73A7.0 7.0 0 0 1 291.85 88.04L287.50 86.02ZM286.42 87.10L288.44 91.45A7.0 7.0 0 0 1 286.13 92.07L285.70 87.29ZM285.30 87.29L284.87 92.07A7.0 7.0 0 0 1 282.56 91.45L284.58 87.10ZM283.50 86.02L279.15 88.04A7.0 7.0 0 0 1 278.53 85.73L283.31 85.30ZM283.31 84.90L278.53 84.47A7.0 7.0 0 0 1 279.15 82.16L283.50 84.18ZM284.58 83.10L282.56 78.75A7.0 7.0 0 0 1 284.87 78.13L285.30 82.91Z" fill="#86e2d2"/><path d="M285.50 83.10L285.50 78.10M286.50 83.37L289.00 79.04M287.23 84.10L291.56 81.60M287.50 85.10L292.50 85.10M287.23 86.10L291.56 88.60M286.50 86.83L289.00 91.16M285.50 87.10L285.50 92.10M284.50 86.83L282.00 91.16M283.77 86.10L279.44 88.60M283.50 85.10L278.50 85.10M283.77 84.10L279.44 81.60M284.50 83.37L282.00 79.04" stroke="#0a0a0a" stroke-width="1.05"/><path d="M285.50 78.10A4.34 4.34 0 0 1 290.45 80.15A4.34 4.34 0 0 1 292.50 85.10A4.34 4.34 0 0 1 290.45 90.05A4.34 4.34 0 0 1 285.50 92.10A4.34 4.34 0 0 1 280.55 90.05A4.34 4.34 0 0 1 278.50 85.10A4.34 4.34 0 0 1 280.55 80.15A4.34 4.34 0 0 1 285.50 78.10Z" fill="none" stroke="#0a0a0a" stroke-width="1.3"/><path d="M285.5 82.5L288.1 85.1L285.5 87.7L282.9 85.1Z" fill="#f40808"/><rect x="298.80" y="76.60" width="17.30" height="17.00" rx=".8" fill="url(#gl)" stroke="#111" stroke-width="1.4"/><circle cx="307.6" cy="85.1" r="7.1" fill="#d4f4ee" stroke="#0a0a0a" stroke-width="1.2"/><circle cx="307.6" cy="85.1" r="5.2" fill="none" stroke="#111" stroke-width=".9" stroke-dasharray="1.3 .9"/><circle cx="307.6" cy="85.1" r="3.3" fill="none" stroke="#187868" stroke-width=".9" stroke-dasharray="1.1 .8"/><path d="M307.6 77.4V92.8M299.8 85.1H315.4" stroke="#111" stroke-width="1.2"/><path d="M307.6 82.6L310.1 85.1L307.6 87.6L305.1 85.1Z" fill="#f01010"/><rect x="320.2" y="76.2" width="9.8" height="13.4" fill="#9fe6e0" stroke="#111" stroke-width="1.1"/><circle cx="325" cy="80.6" r="2.9" fill="#d8ecfa" stroke="#0c0c14" stroke-width="1.3"/><circle cx="325" cy="80.6" r="1" fill="#5a7ab0"/><rect x="321.6" y="85.4" width="4" height="3.2" fill="#2a7ae0"/><rect x="325.4" y="84.6" width="14.4" height="9.6" rx="1" fill="#9fe6d4" stroke="#111" stroke-width="1.2"/><circle cx="330.2" cy="89.5" r="2.9" fill="#d8ecfa" stroke="#0c0c14" stroke-width="1.3"/><circle cx="330.2" cy="89.5" r="1" fill="#5a7ab0"/><rect x="334.6" y="88.8" width="3.8" height="3.4" fill="#2a7ae0"/><rect x="335.6" y="88.8" width="2.8" height="1.8" fill="#c8f0f0"/><rect x="334.4" y="86" width="4" height="1" fill="#333"/><rect x="344.00" y="76.60" width="17.30" height="17.00" rx=".8" fill="url(#gg2)" stroke="#111" stroke-width="1.4"/><path d="M347.4 92.2L358.8 79" stroke="#fff" stroke-width="1.2" stroke-dasharray="1.2 .5"/><circle cx="349.6" cy="81.2" r="3.4" fill="#fafafa" stroke="#151515" stroke-width="1.2"/><circle cx="350" cy="81.4" r="1.1" fill="#555"/><path d="M357.2 84.8Q362.4 88.4 359 93.2Q357 94 355 92.8Q359.4 90 357.2 84.8Z" fill="#fff" stroke="#1a1a1a" stroke-width=".9"/><rect x="366.90" y="76.70" width="17.10" height="16.80" rx=".8" fill="#a6ecd8" stroke="#111" stroke-width="1.6"/><rect x="367.4" y="77.2" width="16.1" height="1.7" fill="#fff"/><path d="M367 79.7H384" stroke="#0a0a0a" stroke-width="1.3"/><path d="M380.9 77V79" stroke="#0a0a0a" stroke-width=".8"/><rect x="367.7" y="80.4" width="15.4" height="1" fill="#e8fbf5"/><path d="M370.2 81.6H383M370.2 83.5H377M370.2 88.5H383M370.2 90.5H381M370.2 92.5H383" stroke="#0f44b4" stroke-width="1"/><path d="M370.2 85.4H381M372 86.7H378" stroke="#3a78d0" stroke-width="1" opacity=".8"/><path d="M368.2 81.6H369.3M368.2 83.5H369.3M368.2 85.6H369.3M368.2 88.5H369.3M368.2 90.5H369.3M368.2 92.5H369.3" stroke="#0a0a0a" stroke-width="1.1"/><path d="M394 80.4H406.6V94.4H394Z" fill="#9fe6d4" stroke="#0a0a0a" stroke-width="1.2"/><path d="M392 78.4H404.8V92.6H392Z" fill="#e8f8f4" stroke="#0a0a0a" stroke-width="1.2"/><path d="M392.2 76H401.8V90.6H388.8V79.4Z" fill="#fff" stroke="#0a0a0a" stroke-width="1.4" stroke-linejoin="round"/><path d="M392.2 76.4V79.4H389.2Z" fill="#8fe0cc" stroke="#0a0a0a" stroke-width=".8"/><path d="M395.6 77.6H400M395.6 79.4H399M395.4 81.6H400M390.6 83.4H400.2M390.6 88.4H398" stroke="#1648b8" stroke-width="1" /><path d="M390.6 85.2H400M391.6 86.7H399.6" stroke="#3a72d8" stroke-width=".9" stroke-dasharray="1.6 .8"/><path d="M414.8 80Q410.6 84 411.6 89Q412.4 92 415.4 93.6" fill="none" stroke="#1a0000" stroke-width="4.4" stroke-linecap="butt"/><path d="M414.8 80Q410.6 84 411.6 89Q412.4 92 415.4 93.6" fill="none" stroke="#f41414" stroke-width="2.7"/><path d="M413.6 89.4L419.4 91.6L414.4 96.2Z" fill="#f41414" stroke="#1a0000" stroke-width=".9" stroke-linejoin="round"/><path d="M425.8 80Q430 84 429 89Q428.2 92 425.2 93.6" fill="none" stroke="#1a0000" stroke-width="4.4"/><path d="M425.8 80Q430 84 429 89Q428.2 92 425.2 93.6" fill="none" stroke="#f41414" stroke-width="2.7"/><path d="M427 89.4L421.2 91.6L426.2 96.2Z" fill="#f41414" stroke="#1a0000" stroke-width=".9" stroke-linejoin="round"/><path d="M420.30 75.10A5.94 5.94 0 0 1 424.97 77.03A5.94 5.94 0 0 1 426.90 81.70A5.94 5.94 0 0 1 424.97 86.37A5.94 5.94 0 0 1 420.30 88.30A5.94 5.94 0 0 1 415.63 86.37A5.94 5.94 0 0 1 413.70 81.70A5.94 5.94 0 0 1 415.63 77.03A5.94 5.94 0 0 1 420.30 75.10Z" fill="#fff" opacity=".9"/><path d="M420.30 76.55A1.55 1.55 0 0 1 423.94 78.06A1.55 1.55 0 0 1 425.45 81.70A1.55 1.55 0 0 1 423.94 85.34A1.55 1.55 0 0 1 420.30 86.85A1.55 1.55 0 0 1 416.66 85.34A1.55 1.55 0 0 1 415.15 81.70A1.55 1.55 0 0 1 416.66 78.06A1.55 1.55 0 0 1 420.30 76.55Z" fill="url(#wg)" stroke="#0c0c0c" stroke-width="1.2" stroke-linejoin="round"/><path d="M420.30 79.80L420.30 76.65M421.64 80.36L423.87 78.13M422.20 81.70L425.35 81.70M421.64 83.04L423.87 85.27M420.30 83.60L420.30 86.75M418.96 83.04L416.73 85.27M418.40 81.70L415.25 81.70M418.96 80.36L416.73 78.13" stroke="#1c2438" stroke-width="1.0" fill="none"/><circle cx="420.3" cy="81.7" r="1.0" fill="#fff"/><path d="M432.6 79.4H444L445 81.4Q446.4 82.4 447.4 80.6Q448.4 79 450.4 79.2Q452.2 79.8 451.8 82L450.6 83.6L449 86L447 88.4L445.6 90L446.6 93L445.6 94L443.4 91L441.6 89.4L439.4 89.6L437.8 91.2L436 88.6L433.6 86.6L432.8 83Z" fill="#c6e2fa" stroke="#0a0a0a" stroke-width="1.15" stroke-linejoin="round"/><path d="M433.6 80.4H443L445 85H434Z" fill="#f2f8ff"/><path d="M439.3 75.6V95.6M432 84.5H452.2M432.6 77L450.2 95.2M447.6 75.6L432.6 90.6" stroke="#ff1a1a" stroke-width="1.05"/><path d="M467.00 74.95A2.33 2.33 0 0 1 470.88 75.99A2.33 2.33 0 0 1 473.71 78.83A2.33 2.33 0 0 1 474.75 82.70A2.33 2.33 0 0 1 473.71 86.58A2.33 2.33 0 0 1 470.88 89.41A2.33 2.33 0 0 1 467.00 90.45A2.33 2.33 0 0 1 463.12 89.41A2.33 2.33 0 0 1 460.29 86.58A2.33 2.33 0 0 1 459.25 82.70A2.33 2.33 0 0 1 460.29 78.83A2.33 2.33 0 0 1 463.12 75.99A2.33 2.33 0 0 1 467.00 74.95Z" fill="none" stroke="#fff" stroke-width="3.45" opacity=".8"/><path d="M467.00 74.95A2.33 2.33 0 0 1 470.88 75.99A2.33 2.33 0 0 1 473.71 78.83A2.33 2.33 0 0 1 474.75 82.70A2.33 2.33 0 0 1 473.71 86.58A2.33 2.33 0 0 1 470.88 89.41A2.33 2.33 0 0 1 467.00 90.45A2.33 2.33 0 0 1 463.12 89.41A2.33 2.33 0 0 1 460.29 86.58A2.33 2.33 0 0 1 459.25 82.70A2.33 2.33 0 0 1 460.29 78.83A2.33 2.33 0 0 1 463.12 75.99A2.33 2.33 0 0 1 467.00 74.95Z" fill="#c6eed6" stroke="#0c0c0c" stroke-width="1.25" stroke-linejoin="round"/><path d="M467.00 80.60L467.00 75.05M468.05 80.88L470.82 76.07M468.82 81.65L473.63 78.88M469.10 82.70L474.65 82.70M468.82 83.75L473.63 86.53M468.05 84.52L470.82 89.33M467.00 84.80L467.00 90.35M465.95 84.52L463.18 89.33M465.18 83.75L460.37 86.53M464.90 82.70L459.35 82.70M465.18 81.65L460.37 78.88M465.95 80.88L463.18 76.07" stroke="#1c2438" stroke-width="1.0" fill="none"/><circle cx="467" cy="82.7" r="2.70" fill="none" stroke="#222" stroke-width=".7" stroke-dasharray=".9 .8" opacity=".8"/><circle cx="467" cy="82.7" r="1.2" fill="#fff"/><rect x="456.1" y="83.7" width="10.8" height="10.6" fill="#ffe600" stroke="#15153a" stroke-width="1.2"/><path d="M459.7 84V94M463.3 84V94M456.4 87.3H466.6M456.4 90.8H466.6" stroke="#5a4a10" stroke-width=".5" opacity=".8"/><path d="M457.4 86.2H458.8M461 86.2H462.2M464.4 86.2H465.8M457.4 89.6H458.8M461 89.6H462.2M464.4 89.6H465.8M457.4 93H458.8M461 93H462.2M464.4 93H465.8" stroke="#2a6af0" stroke-width=".7" opacity=".85"/><rect x="479.10" y="76.60" width="17.30" height="17.00" rx=".8" fill="url(#tl)" stroke="#111" stroke-width="1.4"/><path d="M482.6 81.2Q484.6 79.4 486.4 81Q487.4 82.6 485 84Q488 84 487.6 86.8Q486.8 90 483.4 89.4Q481.8 89 481.8 87.6M486.6 85.2Q489.4 83.6 491.4 85Q493.4 87 491.8 89.4Q490.6 90.6 489.6 89.6M488.4 78.8Q490.6 80.6 492.8 78.6M490.6 77L491 77.4" fill="none" stroke="#18781c" stroke-width="1.5" stroke-linecap="round"/><rect x="502.00" y="76.60" width="17.30" height="17.00" rx=".8" fill="#f4f8f8" stroke="#333" stroke-width="1.4"/><rect x="502.6" y="77.2" width="16" height="2.2" fill="#8a9a98"/><rect x="503.4" y="80" width="14.4" height="1.6" fill="#ffe400"/><path d="M503 82.2H518M503 85H518M503 87.8H518M503 90.6H518M506.8 80V93M510.6 80V93M514.4 80V93" stroke="#999" stroke-width=".7"/><path d="M504 83.8H505.6M507.8 83.8H509.4M511.6 83.8H513.2M515.4 83.8H517M504 86.6H505.6M507.8 86.6H509.4M511.6 86.6H513.2M515.4 86.6H517M504 89.4H505.6M507.8 89.4H509.4M511.6 89.4H513.2M515.4 89.4H517M504 92.2H505.6M507.8 92.2H509.4M511.6 92.2H513.2M515.4 92.2H517" stroke="#2a7ae8" stroke-width="1.1"/><rect x="531.00" y="76.60" width="17.30" height="17.00" rx=".8" fill="url(#pk)" stroke="#111" stroke-width="1.4"/><path d="M535.2 85.4L538.8 89.6L544.8 81.6" fill="none" stroke="#0a0a0a" stroke-width="2.2" stroke-linejoin="miter"/><rect x="553.80" y="76.60" width="17.30" height="17.00" rx=".8" fill="url(#pk)" stroke="#111" stroke-width="1.4"/><circle cx="562.5" cy="85.1" r="7.1" fill="#fff" stroke="#111" stroke-width="1.1"/><path d="M562.5 78.8V80.4M562.5 89.8V91.4M556.2 85.1H557.8M567.2 85.1H568.8" stroke="#2a8af0" stroke-width="1.1"/><path d="M559.6 82.2L562.5 85.1L566 81.4M562.5 85.1V86.6" stroke="#555" stroke-width="1" fill="none"/><path d="M586.70 80.65A2.02 2.02 0 0 1 590.08 81.55A2.02 2.02 0 0 1 592.55 84.03A2.02 2.02 0 0 1 593.45 87.40A2.02 2.02 0 0 1 592.55 90.78A2.02 2.02 0 0 1 590.08 93.25A2.02 2.02 0 0 1 586.70 94.15A2.02 2.02 0 0 1 583.33 93.25A2.02 2.02 0 0 1 580.85 90.78A2.02 2.02 0 0 1 579.95 87.40A2.02 2.02 0 0 1 580.85 84.03A2.02 2.02 0 0 1 583.33 81.55A2.02 2.02 0 0 1 586.70 80.65Z" fill="none" stroke="#fff" stroke-width="3.3000000000000003" opacity=".8"/><path d="M586.70 80.65A2.02 2.02 0 0 1 590.08 81.55A2.02 2.02 0 0 1 592.55 84.03A2.02 2.02 0 0 1 593.45 87.40A2.02 2.02 0 0 1 592.55 90.78A2.02 2.02 0 0 1 590.08 93.25A2.02 2.02 0 0 1 586.70 94.15A2.02 2.02 0 0 1 583.33 93.25A2.02 2.02 0 0 1 580.85 90.78A2.02 2.02 0 0 1 579.95 87.40A2.02 2.02 0 0 1 580.85 84.03A2.02 2.02 0 0 1 583.33 81.55A2.02 2.02 0 0 1 586.70 80.65Z" fill="#f4d8f0" stroke="#0c0c0c" stroke-width="1.1" stroke-linejoin="round"/><path d="M586.70 85.20L586.70 80.75M587.80 85.49L590.03 81.64M588.61 86.30L592.46 84.08M588.90 87.40L593.35 87.40M588.61 88.50L592.46 90.73M587.80 89.31L590.03 93.16M586.70 89.60L586.70 94.05M585.60 89.31L583.38 93.16M584.79 88.50L580.94 90.73M584.50 87.40L580.05 87.40M584.79 86.30L580.94 84.08M585.60 85.49L583.38 81.64" stroke="#1c2438" stroke-width="0.8" fill="none"/><circle cx="586.7" cy="87.4" r="2.80" fill="none" stroke="#222" stroke-width=".7" stroke-dasharray=".9 .8" opacity=".8"/><circle cx="586.7" cy="87.4" r="1.3" fill="#fff"/><circle cx="579.3" cy="80.2" r="3.9" fill="#fff" stroke="#c838b8" stroke-width="1.3"/><path d="M577.6 78.4L579.3 80.2L581.2 78.2M579.3 80.2V82" stroke="#444" stroke-width=".8" fill="none"/><rect x="599.00" y="76.60" width="17.30" height="17.00" rx=".8" fill="url(#pk)" stroke="#111" stroke-width="1.4"/><rect x="599.6" y="77.2" width="16" height="2.2" fill="#fff"/><path d="M599.4 79.8H616" stroke="#111" stroke-width="1"/><path d="M600 82.4H601.6M600 85.2H601.6M600 87.8H601.6M600 90.6H604.6M602.4 82.4H603.4" stroke="#111" stroke-width="1.1"/><path d="M603.6 82.4H609M601.6 85.2H608M609.6 87.8H615M608.6 90.6H615M612 82.4H615M611.4 85.2H615" stroke="#2a66c8" stroke-width="1.05"/><path d="M602 80.4Q603.4 76.4 608.4 76.6Q613.6 77 613.2 81.8Q612.8 85 609.6 87.2Q608.4 88.2 608.2 90.6H605Q605 87.4 607.4 85.2Q609.8 83 609.6 81Q609.2 79.4 607.4 79.8Q605.8 80.2 605.4 82.4ZM604.8 92.2H608.2L607.4 95.6H604.4Z" fill="#fff" stroke="#0a0a0a" stroke-width=".95" stroke-linejoin="round"/><rect x="620.90" y="76.60" width="17.30" height="17.00" rx=".8" fill="url(#pk)" stroke="#111" stroke-width="1.4"/><path d="M622.2 79.4H623.6M622.2 82.4H623.6M622.2 85.2H623.6M622.2 87.8H623.6M622.2 90.6H623.6M624.6 79.4H627.4M624.6 82.4H627M624.4 85.2H625.6M624.6 87.8H626.2M624.6 90.6H625.4" stroke="#111" stroke-width="1.1"/><path d="M632 79.4H637M633.4 82.4H637M634.4 85.2H637M627.6 87.6H632M635.4 87.8H637M628 90.6H633M636 90.6H637" stroke="#2a66c8" stroke-width="1.05"/><path d="M629.8 78.2H632.4L636.8 92.6H633.8L632.8 89.6H628.8L627.8 92.6H625.2ZM629.6 87.2H632L630.9 82.6Z" fill="#fff" stroke="#6a4a6a" stroke-width=".45" stroke-linejoin="round" fill-rule="evenodd"/><rect x="643.90" y="76.60" width="17.30" height="17.00" rx=".8" fill="url(#pk)" stroke="#111" stroke-width="1.4"/><rect x="646.6" y="77.8" width="12.2" height="11.6" fill="#ececec" stroke="#8a0060" stroke-width="1.2"/><rect x="647.4" y="78.5" width="10.6" height="1.2" fill="#30b030"/><path d="M649 82.2H656.6M649 84.6H656.6M649 87H656.6" stroke="#888" stroke-width="1" stroke-dasharray="1.6 1"/><rect x="666.20" y="76.60" width="17.30" height="17.00" rx=".8" fill="url(#pw)" stroke="#111" stroke-width="1.4"/><path d="M672 88.4L683 91.6V93.2H670Z" fill="#fff" opacity=".85"/><circle cx="678.6" cy="81.6" r="4.6" fill="#f6d0f2" stroke="#a83898" stroke-width=".8"/><text x="678.6" y="84.6" text-anchor="middle" font-family="Liberation Serif" font-style="italic" font-weight="700" font-size="8.6" fill="#fff" stroke="#7a2a70" stroke-width=".3">&amp;</text><path d="M667.6 92.8L675.2 85.2" stroke="#111" stroke-width="2.4" stroke-linecap="round"/><path d="M668.6 91.8L674 86.4" stroke="#888" stroke-width=".7"/><path d="M666.8 77.2L673.4 84.4" stroke="#111" stroke-width="1.1"/><path d="M700.6 85.6L707.6 91.8" stroke="#222" stroke-width="2.6" stroke-linecap="round"/><path d="M701.6 86.2L707.2 91.2" stroke="#999" stroke-width=".8"/><circle cx="697" cy="81.7" r="5.3" fill="url(#lens)" stroke="#222" stroke-width="1.3"/><path d="M694.2 81.7H699.8M697 78.9V84.5" stroke="#111" stroke-width="1.2"/><path d="M720.9 85.6L727.9 91.8" stroke="#222" stroke-width="2.6" stroke-linecap="round"/><path d="M721.9 86.2L727.5 91.2" stroke="#999" stroke-width=".8"/><circle cx="717.3" cy="81.7" r="5.3" fill="url(#lens)" stroke="#222" stroke-width="1.3"/><path d="M714.5 81.7H720.0999999999999" stroke="#111" stroke-width="1.2"/><rect x="733.77" y="76.17" width="17.55" height="17.25" rx=".8" fill="url(#bl)" stroke="#111" stroke-width="1.35"/><path d="M742.5 78.2Q743 84.5 749.2 85Q743 85.5 742.5 91.6Q742 85.5 735.8 85Q742 84.5 742.5 78.2Z" fill="#e4eefc" stroke="#12326a" stroke-width="1.25" stroke-linejoin="round"/></svg>
<svg class="i" style="left:590px;top:99px" width="101" height="26" viewBox="590 99 101 26"><defs><linearGradient id="rd" x1="0" y1="0" x2="0" y2="1"><stop offset="0" stop-color="#f06a48"/><stop offset=".5" stop-color="#e03818"/><stop offset="1" stop-color="#c82808"/></linearGradient></defs><rect x="592.4" y="101" width="18.2" height="17.7" fill="#ffffc6"/><rect x="600.6" y="103.6" width="9.8" height="7.6" fill="#fdfdf0" stroke="#3a5a4a" stroke-width="1.1"/><rect x="594.5" y="107.6" width="12" height="9.4" fill="#d6f0d8" stroke="#0a0a0a" stroke-width="1.5"/><rect x="595.7" y="108.8" width="9.6" height="7" fill="none" stroke="#10d050" stroke-width=".9"/><rect x="612.4" y="101" width="17.6" height="17.7" fill="#e6e6cc"/><path d="M612.4 118.7V101H630" fill="none" stroke="#fff" stroke-width="1.2"/><path d="M612.6 118.3H629.6V101.4" fill="none" stroke="#6a6a6a" stroke-width="1.4"/><rect x="615.4" y="103.6" width="11.8" height="12" fill="#7a7a00" stroke="#5a5a20" stroke-width=".6"/><rect x="616.4" y="109.6" width="9.8" height="3.2" fill="#e8ea00"/><rect x="617.8" y="103.8" width="7" height="4.8" fill="#fff"/><path d="M617.8 109.1H624.8" stroke="#2030c0" stroke-width=".9"/><rect x="618.4" y="112.9" width="6" height="2.7" fill="#4a4a10"/><rect x="622" y="113.2" width="1.8" height="2.2" fill="#f0f0e0"/><rect x="632.4" y="101" width="17.8" height="17.7" fill="#ffffc6"/><path d="M636.2 111.4V103.6H646L648.4 106.4V111.4" fill="#fff" stroke="#3a3a4a" stroke-width="1.1"/><rect x="634.4" y="111.6" width="15.2" height="3" fill="#fff" stroke="#999" stroke-width=".4"/><path d="M634.2 115.1H649.8" stroke="#111" stroke-width="1"/><rect x="634.2" y="115.6" width="15.6" height="3" fill="#5c9c08"/><rect x="652.4" y="101" width="17.8" height="17.7" fill="#ffffc6"/><text x="661.3" y="114.6" text-anchor="middle" font-family="Liberation Serif" font-style="italic" font-weight="400" font-size="17" fill="#163c00" stroke="#163c00" stroke-width=".25" textLength="15.6" lengthAdjust="spacingAndGlyphs">@</text><rect x="671.6" y="101" width="17.8" height="17.7" fill="#f4f4f4"/><path d="M671.8 118.7V101.2H689.2" fill="none" stroke="#fff" stroke-width="1"/><path d="M672 118.2H688.9V101.4" fill="none" stroke="#777" stroke-width="1.4"/><rect x="674" y="103.6" width="12.2" height="12.4" rx="1.8" fill="url(#rd)" stroke="#b02a10" stroke-width=".6"/><path d="M677.2 106.8L683 112.8M683 106.8L677.2 112.8" stroke="#fff" stroke-width="2" stroke-linecap="square"/></svg>
<svg class="i" style="left:39px;top:33px" width="17" height="17" viewBox="39 33 17 17"><defs><radialGradient id="ti" cx=".35" cy=".35" r=".8"><stop offset="0" stop-color="#cc22a6"/><stop offset=".55" stop-color="#8a0a74"/><stop offset="1" stop-color="#2a0428"/></radialGradient><clipPath id="tc"><circle cx="47.3" cy="41.3" r="6.2"/></clipPath></defs><circle cx="47.3" cy="41.3" r="6.3" fill="url(#ti)" stroke="#1a0a1a" stroke-width="1"/><g clip-path="url(#tc)"><path d="M44 49L53.5 36.5L56 40L49 50Z" fill="#b828e0"/><path d="M51 36L55 40L53 45Z" fill="#3a1070"/><path d="M42.8 47.6L52.4 35.6" stroke="#f04020" stroke-width="1.8"/><path d="M43.6 48.4L53 36.6" stroke="#f8a060" stroke-width=".6"/><ellipse cx="48.2" cy="37.2" rx="2.2" ry="1.6" fill="#fff" opacity=".95"/><circle cx="45.6" cy="41.2" r=".7" fill="#e8fff0"/><circle cx="48.2" cy="43.4" r=".6" fill="#d8ffd8"/></g><circle cx="47.3" cy="41.3" r="6.3" fill="none" stroke="#1a0a1a" stroke-width="1.1" stroke-dasharray="2 .5"/></svg>
</body></html>
